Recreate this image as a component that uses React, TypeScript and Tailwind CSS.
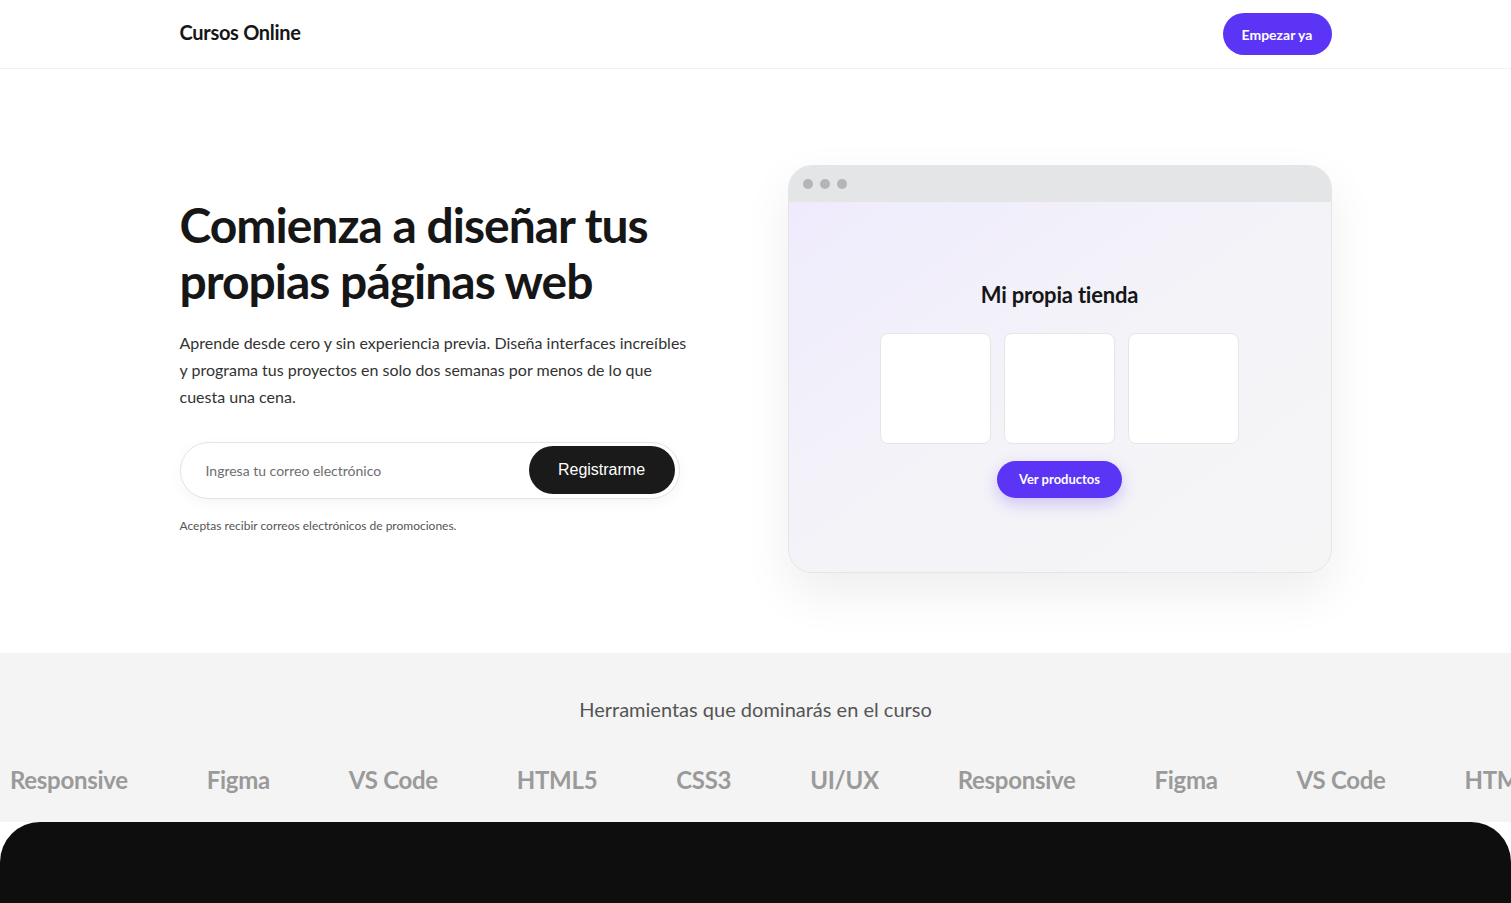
import React from 'react';

const TOOLS = ['Responsive', 'Figma', 'VS Code', 'HTML5', 'CSS3', 'UI/UX', 'Responsive', 'Figma', 'VS Code', 'HTML5', 'CSS3'];

function Header() {
  return (
    <header className="border-b border-[#f0f0f0] bg-white">
      <div className="max-w-6xl mx-auto h-[68px] flex items-center justify-between">
        <span className="text-[20px] font-bold text-[#161616] tracking-[-0.3px] pb-[4px]">Cursos Online</span>
        <button className="h-[42px] w-[109px] rounded-full bg-[#5b34f6] text-white text-[14px] font-bold">
          Empezar ya
        </button>
      </div>
    </header>
  );
}

function BrowserMockup() {
  return (
    <div className="rounded-3xl border border-[#e5e5e7] overflow-hidden shadow-[0_20px_50px_rgba(0,0,0,0.07)] bg-[#f5f5f6]">
      <div className="h-9 bg-[#e4e5e7] flex items-center gap-[7px] px-[14px]">
        <span className="w-[10px] h-[10px] rounded-full bg-[#b4b5b9]" />
        <span className="w-[10px] h-[10px] rounded-full bg-[#b4b5b9]" />
        <span className="w-[10px] h-[10px] rounded-full bg-[#b4b5b9]" />
      </div>
      <div className="h-[370px] bg-gradient-to-br from-[#efebfd] via-[#f4f3f8] to-[#f5f5f6] flex flex-col items-center pt-[82px]">
        <h3 className="text-[22px] font-bold text-[#161616] leading-none tracking-[-0.2px]">Mi propia tienda</h3>
        <div className="flex gap-[13px] mt-[27px]">
          {[0, 1, 2].map((i) => (
            <div key={i} className="w-[111px] h-[111px] bg-white rounded-lg border border-[#e6e6e8]" />
          ))}
        </div>
        <button className="mt-[17px] h-[37px] w-[125px] rounded-full bg-[#5b34f6] text-white text-[13px] font-bold shadow-[0_6px_16px_rgba(91,52,246,0.25)]">
          Ver productos
        </button>
      </div>
    </div>
  );
}

function Hero() {
  return (
    <section className="bg-white pt-24 pb-20">
      <div className="max-w-6xl mx-auto grid grid-cols-2 gap-16 items-center">
        <div className="pb-[6px]">
          <h1 className="text-[48px] font-bold leading-[1.15] text-[#161616] tracking-[-1px]">
            Comienza a diseñar tus
            <br />
            propias páginas web
          </h1>
          <p className="mt-[21px] text-[16px] leading-[27px] text-[#333] max-w-[512px]">
            Aprende desde cero y sin experiencia previa. Diseña interfaces increíbles y programa tus proyectos en solo dos
            semanas por menos de lo que cuesta una cena.
          </p>
          <div className="mt-[32px] w-[500px] h-[57px] rounded-full border border-[#e4e4e4] bg-white flex items-center p-1 shadow-[0_4px_14px_rgba(0,0,0,0.04)]">
            <input
              placeholder="Ingresa tu correo electrónico"
              className="flex-1 min-w-0 pl-[21px] text-[14px] outline-none placeholder:text-[#6e6e6e] bg-transparent"
            />
            <button className="h-12 w-[146px] rounded-full bg-[#1a1a1a] text-white text-[16px] [font-family:'Liberation_Sans',Arial,sans-serif]">
              Registrarme
            </button>
          </div>
          <p className="mt-[18px] text-[12px] text-[#555]">Aceptas recibir correos electrónicos de promociones.</p>
        </div>
        <BrowserMockup />
      </div>
    </section>
  );
}

function Tools() {
  return (
    <section className="bg-[#f4f4f4] pt-[46px] h-[169px] overflow-hidden">
      <p className="text-center text-[20px] text-[#555] leading-none">Herramientas que dominarás en el curso</p>
      <div className="mt-[49px] flex gap-[79px] pl-[10px] whitespace-nowrap">
        {TOOLS.map((t, i) => (
          <span key={i} className="text-[24px] font-bold text-[#9a9a9a] leading-none shrink-0 tracking-[-0.3px]">
            {t}
          </span>
        ))}
      </div>
    </section>
  );
}

export default function App() {
  return (
    <div className="min-h-screen bg-white overflow-hidden [font-family:Lato,'Noto_Sans',sans-serif]">
      <Header />
      <Hero />
      <Tools />
      <section className="bg-[#0e0e0e] rounded-t-[40px] h-[400px]" />
    </div>
  );
}
